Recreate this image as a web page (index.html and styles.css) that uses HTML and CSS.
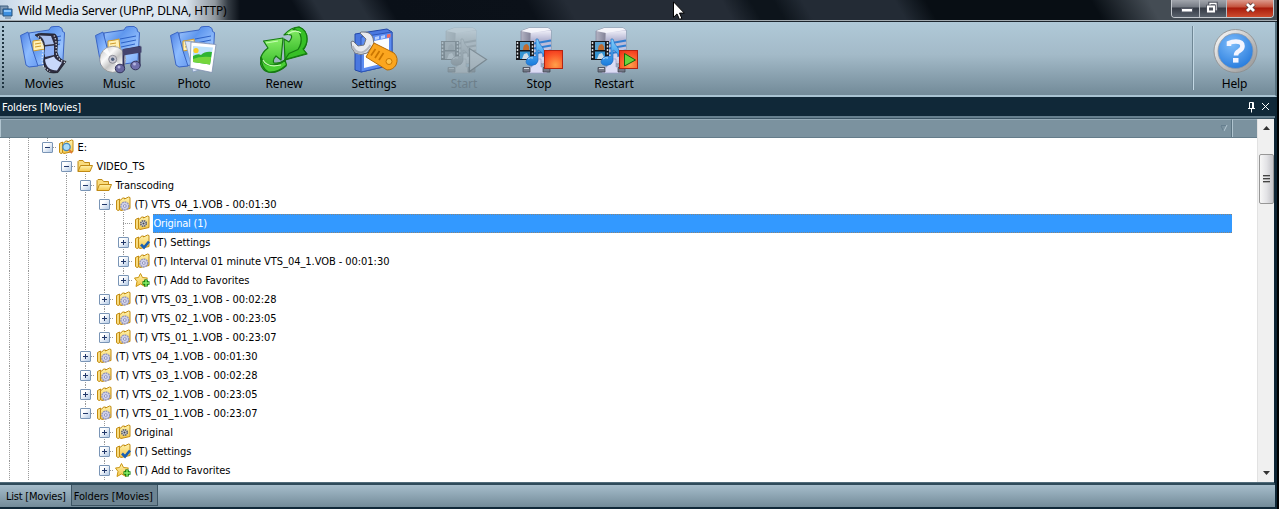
FILE: index.html
```html
<!DOCTYPE html>
<html lang="en">
<head>
  <meta charset="UTF-8" />
  <title>Wild Media Server (UPnP, DLNA, HTTP)</title>
  <link rel="stylesheet" href="styles.css">
</head>
<body>
<svg class="defs" width="0" height="0">
  <defs>
    <linearGradient id="gFolder" x1="0" y1="0" x2="1" y2="1"><stop offset="0" stop-color="#a4caff"/><stop offset=".35" stop-color="#5f97ee"/><stop offset=".7" stop-color="#9ac4ff"/><stop offset="1" stop-color="#74a4f4"/></linearGradient>
    <linearGradient id="gFront" x1="0" y1="0" x2="1" y2="1"><stop offset="0" stop-color="#4d80e2"/><stop offset=".5" stop-color="#8dbcff"/><stop offset="1" stop-color="#6b9df2"/></linearGradient>
    <linearGradient id="gGreen" x1="0" y1="0" x2="0" y2="1"><stop offset="0" stop-color="#8af06a"/><stop offset="1" stop-color="#27b01c"/></linearGradient>
    <linearGradient id="gServer" x1="0" y1="0" x2="1" y2="0"><stop offset="0" stop-color="#b4b4c4"/><stop offset=".3" stop-color="#85859a"/><stop offset=".35" stop-color="#e8e8f4"/><stop offset="1" stop-color="#b9b9d4"/></linearGradient>
    <linearGradient id="gFace" x1="0" y1="0" x2="0" y2="1"><stop offset="0" stop-color="#efeff8"/><stop offset=".3" stop-color="#b4b5d2"/><stop offset="1" stop-color="#dcdcf4"/></linearGradient>
    <linearGradient id="gNote" x1="0" y1="0" x2="0" y2="1"><stop offset="0" stop-color="#7fd0ff"/><stop offset="1" stop-color="#1a7bdc"/></linearGradient>
    <linearGradient id="gGold" x1="0" y1="0" x2="0" y2="1"><stop offset="0" stop-color="#fff3ae"/><stop offset="1" stop-color="#f3c64a"/></linearGradient>
    <radialGradient id="gRed" cx=".6" cy=".8" r=".9"><stop offset="0" stop-color="#ffa04a"/><stop offset=".6" stop-color="#fb5a2a"/><stop offset="1" stop-color="#f0321a"/></radialGradient>
    <radialGradient id="gHelp" cx=".4" cy=".3" r=".8"><stop offset="0" stop-color="#7dbbfa"/><stop offset="1" stop-color="#2076da"/></radialGradient>
    <linearGradient id="gRing" x1="0" y1="0" x2="1" y2="1"><stop offset="0" stop-color="#ffffff"/><stop offset="1" stop-color="#8f8f8f"/></linearGradient>
    <linearGradient id="gDisc" x1="0" y1="0" x2="1" y2="1"><stop offset="0" stop-color="#bdbdbd"/><stop offset=".35" stop-color="#fafafa"/><stop offset=".55" stop-color="#c4c4c4"/><stop offset=".75" stop-color="#f4f4f4"/><stop offset="1" stop-color="#b0b0b0"/></linearGradient>
  </defs>

  <symbol id="folder" viewBox="0 0 48 48">
    <path d="M9 7l20-3 2-3 3-.5h5l3 2 .5 3 2 1-1.500 27-3 3-30 4z" fill="url(#gFolder)" stroke="#3b66c4" stroke-width="1"/>
    <path d="M25 13l16-3M26 17l15-3M26 21l14-3" stroke="#2d62c6" stroke-width="1"/>
    <path d="M13 15l7-1 4-1 1 10-12 2z" fill="#fff0b4" stroke="#cf9a2a" stroke-width="1"/>
    <path d="M15 18l6-1M15 21l6-1" stroke="#cf9a2a" stroke-width="1"/>
    <path d="M0.500 9.500L8 6l5 19 5 15-9 1-3-2z" fill="url(#gFront)" stroke="#3b66c4" stroke-width="1"/>
  </symbol>

  <symbol id="movies" viewBox="0 0 48 48">
    <use href="#folder"/>
    <path d="M15 9q4-2.500 9-1.500l11 .5q3.500 3 2.500 9l-.5 9q2 8 9 9.500l-8 11q-10 2-13-4-3-7 0-15 0-8-3-13z" fill="#2d2d40" stroke="#15151f" stroke-width=".6"/>
    <path d="M19 9.500l12 .5 3 8-9 1q-1-7-6-9.500z" fill="#a9c0ee"/>
    <path d="M25 20.500l9-1v9.500l-9 2z" fill="#8fb2f6"/>
    <path d="M25 33.500l9-3q2 4 8 6l-5 8q-11 0-12-11z" fill="#c8d8fa"/>
    <path d="M18 10.500q5 5 5 14-2 12 1 17l6 4M34 9.500q3 6 2 16 1 8 9 11" fill="none" stroke="#e6eaf4" stroke-width="1.200" stroke-dasharray="1.300 1.700"/>
  </symbol>

  <symbol id="music" viewBox="0 0 48 48">
    <use href="#folder"/>
    <circle cx="17.700" cy="33.300" r="13" fill="url(#gDisc)" stroke="#8a8a8a" stroke-width=".7"/>
    <path d="M17.700 33.300L8 25l4-3zM17.700 33.300L28 41l-4 3z" fill="#fff" opacity=".8"/>
    <circle cx="17.700" cy="33.300" r="4" fill="#c8c8d2" stroke="#8d8d96"/>
    <circle cx="17.700" cy="33.300" r="1.700" fill="#51617e"/>
    <path d="M28.500 42V24l16-3v19" fill="none" stroke="#33335a" stroke-width="2"/>
    <path d="M28 23l18.500-2.500v6l-18.500 3z" fill="#44446e"/>
    <ellipse cx="25" cy="42.500" rx="4.700" ry="4.300" fill="#6868a0" stroke="#33335a"/>
    <ellipse cx="40.500" cy="39.500" rx="4.700" ry="4.300" fill="#7070ac" stroke="#33335a"/>
    <circle cx="24" cy="41" r="1.500" fill="#b4b4de"/>
    <circle cx="39.500" cy="38" r="1.500" fill="#b4b4de"/>
  </symbol>

  <symbol id="photo" viewBox="0 0 48 48">
    <use href="#folder"/>
    <path d="M15 15l20 2 2 24-14 5z" fill="#dbe6f8" stroke="#7b93bc" stroke-width=".7"/>
    <path d="M21 16l25 2.500-4 28L20 42z" fill="#fff" stroke="#7f8fb0" stroke-width=".8"/>
    <path d="M23 20l20 1.500-3 17-17-2.500z" fill="#bfe2fb"/>
    <path d="M23 30q5-3 8-1 4-4 11-3l-2 12.500-17-2.500z" fill="#2fb432"/>
    <path d="M23 33q7-3 18-2l-1 7.500-17-2.500z" fill="#76d63c"/>
    <circle cx="26" cy="24.500" r="2.600" fill="#f9cb25"/>
  </symbol>

  <symbol id="renew" viewBox="0 0 48 48">
    <g stroke="#167b12" stroke-width="1.200" stroke-linejoin="round">
      <path d="M3.500 15l19.500-3-2 22-5-4q-4 4-2 7 5 1 11-3l1 6q-9 8-18 6-7-2-8-11 1-8 8-13z" fill="url(#gGreen)"/>
      <path d="M1 31q3 9 11 8 8 0 13-5l1.500 5q-9 8-18 7-7-3-7.500-15z" fill="#4bcf35"/>
      <path d="M24 9q7-8 15-8 8 3 8 12 0 7-4 11l4 4-22 6-1-21 5 3q4-5 2-7-3-1-7 0z" fill="url(#gGreen)"/>
      <path d="M39 1q8 3 8 12 0 6-4 10l3.500 4.500-21.500 6 4-6 9-4q4-6 3-12-1-8-8-8 3-2.500 6-2.500z" fill="#37c026"/>
    </g>
    <path d="M6 17l12-2M3 34q4 8 18 5M28 8q7-5 13-1" fill="none" stroke="#c7fdb4" stroke-width="1.200"/>
  </symbol>

  <symbol id="settings" viewBox="0 0 48 48">
    <path d="M5 8l32-5 5 3v33l-31 7-6-2z" fill="#4a78e0" stroke="#2348a8"/>
    <path d="M11 11l31-5v33l-31 7z" fill="#5c8cf0" stroke="#2c55b8"/>
    <path d="M14 17l25-5v24l-25 6z" fill="#fbfdff"/>
    <path d="M25 11l4-1v3l-4 1zM31 10l4-1v3l-4 1z" fill="#b8d0ff"/>
    <path d="M37 8.500l3.500-.8v3.500l-3.500.8z" fill="#f36b5c"/>
    <path d="M1 16l2-1 5 5 6-1 2-6-6-6 1-1q10-1 12 6l1 6-7 9q-6 3-12 0-4-4-4-11z" fill="#e8eaee" stroke="#70757e"/>
    <path d="M2.500 20q3 7 9 6.500 5-1 9-7.500" fill="none" stroke="#b4b8c0" stroke-width="2"/>
    <path d="M24 17l20 10q5 5 2 12-3 5-9 5L16 31z" fill="#fba61f" stroke="#b66a05"/>
    <path d="M25.500 23l-4.500 6.500M29.500 25l-4.500 7M33.500 27l-4.500 7" stroke="#c97500" stroke-width="1.700"/>
    <circle cx="39" cy="35.500" r="3" fill="#ffc44b" stroke="#c97500"/>
  </symbol>

  <symbol id="server" viewBox="0 0 48 48">
    <path d="M6 5l8-3h19l3 2v29l-8 5-17-4-5-5z" fill="url(#gServer)" stroke="#777790" stroke-width=".6"/>
    <path d="M6 5l8-3h19l3 2-20 3z" fill="#f4f4fa"/>
    <path d="M16 7l20-2.500v29L16 36z" fill="url(#gFace)"/>
    <path d="M19 17.500l17-3M19 22.500l17-3M19 27.500l17-3" stroke="#2f7ed2" stroke-width="2"/>
    <path d="M17 33h9v8h6v6H12v-6h5z" fill="#dcdcf4" stroke="#9a9cc4" stroke-width=".7"/>
    <path d="M8 41.500h7v4.500H8zM28 41.500h7v4.500h-7z" fill="#747886" stroke="#3b3e47" stroke-width=".7"/>
    <path d="M9 42.500h5M29 42.500h5" stroke="#d4d6dc"/>
    <path d="M1 15h18v19H1z" fill="#17181c"/>
    <path d="M2.500 16v17M17.500 16v17" stroke="#d9dde2" stroke-width="1.500" stroke-dasharray="2 1.500"/>
    <path d="M5 16h10v8H5z" fill="#5b9fcc"/>
    <path d="M5 25.500h10V33H5z" fill="#3494d2"/>
    <path d="M8 24q0-6 4-6 3 2 2 6z" fill="#c26a2c"/>
    <path d="M7 33l2-5 3-1 3 6z" fill="#cfdbe4"/>
    <path d="M21 13h2q1 5 5 9 3 4 0 9 0-5-5-7v11q-1 4-6 4.500-6 0-6-4 1-6 10-5z" fill="url(#gNote)" stroke="#1c67bd" stroke-width=".6"/>
    <path d="M13 33q2-2 5-1" fill="none" stroke="#b7e4ff"/>
  </symbol>
  <symbol id="start" viewBox="0 0 48 48">
    <use href="#server"/>
    <path d="M29.500 22.500l17 11-17 12z" fill="#d8d8d8" stroke="#222" stroke-width="1.200"/>
  </symbol>
  <symbol id="stop" viewBox="0 0 48 48">
    <use href="#server"/>
    <rect x="29.500" y="24.500" width="18" height="18" fill="url(#gRed)" stroke="#b32412"/>
  </symbol>
  <symbol id="restart" viewBox="0 0 48 48">
    <use href="#server"/>
    <rect x="29.500" y="24.500" width="18" height="18" fill="url(#gRed)" stroke="#b32412"/>
    <path d="M34.500 27.500l11 6.500-11 6z" fill="#68d43c" stroke="#17670f"/>
  </symbol>
  <symbol id="help" viewBox="0 0 48 48">
    <circle cx="24.500" cy="25" r="21.500" fill="url(#gRing)" stroke="#8b8b8b" stroke-width=".8"/>
    <circle cx="24.500" cy="25" r="17.500" fill="url(#gHelp)" stroke="#8f9aa8" stroke-width=".8"/>
    <path d="M18 20v-3q3-1.500 7-1.500 6.500 0 6.500 4.500 0 3-3.500 5-3 1.500-3 4.500" fill="none" stroke="#f4f5ff" stroke-width="4.600"/>
    <path d="M22 32h5.500v4.600h-5.500z" fill="#f4f5ff"/>
  </symbol>

  <!-- 16px tree icons -->
  <symbol id="t-open" viewBox="0 0 16 16">
    <path d="M1 13.500V3.500l1-1h4l1.500 2h5v3" fill="#f9dc7e" stroke="#c08a14"/>
    <path d="M1 13.500l2.500-6h12l-2.500 6z" fill="url(#gGold)" stroke="#c08a14"/>
  </symbol>
  <symbol id="t-folder" viewBox="0 0 16 16">
    <path d="M1.500 4.500l3-1.500v11l-1.500.5-1.500-1z" fill="#f8dc80" stroke="#c38c12"/>
    <path d="M4.500 13.500v-9l2-1 1-1.500 2 0 0 1 4-2 1.500.500v11l-9 2z" fill="url(#gGold)" stroke="#c38c12"/>
  </symbol>
  <symbol id="t-drive" viewBox="0 0 16 16">
    <use href="#t-folder"/>
    <circle cx="8.500" cy="8" r="3.700" fill="#a9dcfa" stroke="#4488bc" stroke-width="1.300"/>
    <path d="M11 10.700l3 3.300" stroke="#e07c32" stroke-width="2"/>
  </symbol>
  <symbol id="t-gear" viewBox="0 0 16 16">
    <use href="#t-folder"/>
    <circle cx="9.800" cy="10" r="4" fill="#cfd1ea" stroke="#8f92bc" stroke-width="1.300" stroke-dasharray="1.800 .8"/>
    <circle cx="9.800" cy="10" r="1.400" fill="#eef" stroke="#8083ae" stroke-width=".8"/>
  </symbol>
  <symbol id="t-original" viewBox="0 0 16 16">
    <use href="#t-folder"/>
    <circle cx="9.500" cy="8.500" r="2.800" fill="#c8cad2" stroke="#63656f" stroke-width="1.600" stroke-dasharray="1.500 .7"/>
    <circle cx="9.500" cy="8.500" r="1" fill="#444"/>
  </symbol>
  <symbol id="t-check" viewBox="0 0 16 16">
    <use href="#t-folder"/>
    <path d="M7 10.500l3 3 5-6" fill="none" stroke="#1860b4" stroke-width="2.600"/>
  </symbol>
  <symbol id="t-star" viewBox="0 0 16 16">
    <path d="M6.500 1.500l2 4 5 .5-3.500 3.500 1 5-4.500-2.500L2 14.500 3 9.500.5 6l4-.5z" fill="url(#gGold)" stroke="#cb9613"/>
    <path d="M8.500 11h7M12 7.500v7" stroke="#087a08" stroke-width="3.600"/>
    <path d="M9 11h6M12 8v6" stroke="#8cf06c" stroke-width="1.400"/>
  </symbol>
</svg>

<div class="window">
  <div class="titlebar">
    <svg class="app-icon" width="16" height="16" viewBox="0 0 16 16">
      <path d="M0 2h8v8H0z" fill="#7d98b4" stroke="#3f5f7f"/>
      <path d="M3 5h9v7H3z" fill="#3d8fe0" stroke="#285078"/>
      <path d="M4 6h7v2H4z" fill="#8cc5fa"/>
      <path d="M5 14h6" stroke="#63778c"/>
    </svg>
    <span class="title">Wild Media Server (UPnP, DLNA, HTTP)</span>
    <svg class="cursor" width="12" height="19" viewBox="0 0 12 19">
      <path d="M.5.8v15.500l3.500-3.400 2.500 5.500 2.400-1-2.400-5.300h4.800z" fill="#fff" stroke="#000"/>
    </svg>
    <div class="controls">
      <div class="control"><svg width="27" height="18"><rect x="9.500" y="8.500" width="11" height="3.500" fill="#fff" stroke="#555a66"/></svg></div>
      <div class="control"><svg width="26" height="18"><path d="M10 3.500h6v6h-6z" fill="none" stroke="#4d525d" stroke-width="3.500"/><path d="M10 3.500h6v6h-6z" fill="none" stroke="#fff" stroke-width="1.300"/><path d="M8 6.500h6v5H8z" fill="#555" stroke="#4d525d" stroke-width="3.500"/><path d="M8 6.500h6v5H8z" fill="#4d525d" stroke="#fff" stroke-width="2"/></svg></div>
      <div class="control close"><svg width="46" height="18"><path d="M20 4l7 7M27 4l-7 7" stroke="#593a3a" stroke-width="4.500"/><path d="M20 4l7 7M27 4l-7 7" stroke="#fff" stroke-width="2.800"/></svg></div>
    </div>
  </div>

  <div class="toolbar">
    <div class="grip"></div>
    <div class="tool"><svg><use href="#movies"/></svg><span>Movies</span></div>
    <div class="tool"><svg><use href="#music"/></svg><span>Music</span></div>
    <div class="tool"><svg><use href="#photo"/></svg><span>Photo</span></div>
    <div class="tool gap"><svg><use href="#renew"/></svg><span>Renew</span></div>
    <div class="tool gap"><svg><use href="#settings"/></svg><span>Settings</span></div>
    <div class="tool gap disabled"><svg><use href="#start"/></svg><span>Start</span></div>
    <div class="tool"><svg><use href="#stop"/></svg><span>Stop</span></div>
    <div class="tool"><svg><use href="#restart"/></svg><span>Restart</span></div>
    <div class="separator"></div>
    <div class="tool help"><svg><use href="#help"/></svg><span>Help</span></div>
  </div>

  <div class="caption">
    <span>Folders [Movies]</span>
    <svg width="24" height="12" viewBox="0 0 24 12">
      <path d="M2.500 7V1.500h4V7M5.500 1v6M1 7.500h7M4.500 8v3.500" fill="none" stroke="#fff"/>
      <path d="M15 2l7 7M22 2l-7 7" fill="none" stroke="#fff"/>
    </svg>
  </div>

  <div class="panel">
    <div class="list">
      <div class="header">
        <div class="col main"><svg width="8" height="7"><path d="M1 .5h5.500M1 1l2.500 5" fill="none" stroke="#667f8f"/><path d="M7 0L4 6" stroke="#b4c6d2"/></svg></div>
        <div class="col"></div>
      </div>
      <div class="tree" id="tree"></div>
    </div>
    <div class="scrollbar">
      <svg class="arrow" width="7" height="4"><path d="M0 4l3.500-4L7 4z" fill="#333"/></svg>
      <div class="thumb"><i></i><i></i><i></i></div>
      <svg class="arrow down" width="7" height="4"><path d="M0 0h7L3.500 4z" fill="#333"/></svg>
    </div>
  </div>

  <div class="tabs">
    <div class="tab">List [Movies]</div>
    <div class="tab active">Folders [Movies]</div>
  </div>
</div>

<script>
  // guides: '|' passes through, 'T' branch, 'L' last branch, ' ' nothing
  // the last guide is the node's own branch
  const rows = [
    ['||L', '-', 'drive', 'E:'],
    ['|| T', '-', 'open', 'VIDEO_TS'],
    ['|| |T', '-', 'open', 'Transcoding'],
    ['|| ||T', '-', 'gear', '(T) VTS_04_1.VOB - 00:01:30'],
    ['|| |||T', '', 'original', 'Original (1)', true],
    ['|| |||T', '+', 'check', '(T) Settings'],
    ['|| |||T', '+', 'gear', '(T) Interval 01 minute VTS_04_1.VOB - 00:01:30'],
    ['|| |||L', '+', 'star', '(T) Add to Favorites'],
    ['|| ||T', '+', 'gear', '(T) VTS_03_1.VOB - 00:02:28'],
    ['|| ||T', '+', 'gear', '(T) VTS_02_1.VOB - 00:23:05'],
    ['|| ||L', '+', 'gear', '(T) VTS_01_1.VOB - 00:23:07'],
    ['|| |T', '+', 'gear', '(T) VTS_04_1.VOB - 00:01:30'],
    ['|| |T', '+', 'gear', '(T) VTS_03_1.VOB - 00:02:28'],
    ['|| |T', '+', 'gear', '(T) VTS_02_1.VOB - 00:23:05'],
    ['|| |L', '-', 'gear', '(T) VTS_01_1.VOB - 00:23:07'],
    ['|| | T', '+', 'original', 'Original'],
    ['|| | T', '+', 'check', '(T) Settings'],
    ['|| | T', '+', 'star', '(T) Add to Favorites']
  ];

  const guideClass = { '|': 'pass', 'T': 'branch', 'L': 'branch last', ' ': '' };
  const tree = document.getElementById('tree');

  rows.forEach(([guides, sign, icon, text, selected]) => {
    const row = document.createElement('div');
    row.className = 'row' + (selected ? ' selected' : '');

    [...guides].forEach((g, i) => {
      const cell = document.createElement('div');
      cell.className = 'guide ' + guideClass[g];
      if (i === guides.length - 1 && sign) {
        const box = document.createElement('div');
        box.className = 'expander' + (sign === '+' ? ' plus' : '');
        cell.appendChild(box);
      }
      row.appendChild(cell);
    });

    row.insertAdjacentHTML('beforeend',
      `<div class="icon${sign === '-' ? ' open' : ''}"><svg width="16" height="16"><use href="#t-${icon}"/></svg></div>`);

    const label = document.createElement('div');
    label.className = 'label';
    label.textContent = text;
    row.appendChild(label);
    tree.appendChild(row);
  });
</script>
</body>
</html>
```
FILE: styles.css
```css
* {
  box-sizing: border-box;
}

body {
  margin: 0;
  background: #000;
  color: #000;
  font-family: "DejaVu Sans Condensed", "DejaVu Sans", sans-serif;
  font-size: 11px;
  overflow: hidden;
}

svg {
  display: block;
  flex: none;
}

.defs {
  position: absolute;
}

.window {
  width: 1277px;
  height: 509px;
  display: flex;
  flex-direction: column;
  background: #0e2636;
}

/* title bar */
.titlebar {
  position: relative;
  flex: none;
  height: 22px;
  display: flex;
  align-items: flex-start;
  border-bottom: 1px solid #1b242c;
  box-shadow: inset 0 -1px #a3abb1;
  background:
    linear-gradient(90deg, #c5d6e6 0, #dfe9f2 30px, #dbe6f0 185px, #b4bdc6 200px, #8f969c 215px, rgba(70, 78, 86, .7) 228px, transparent 240px),
    linear-gradient(60deg, transparent 262px, #272f39 282px, #272f39 320px, transparent 345px, #0b1119 465px, #252c36 500px, #252c36 635px, #0d141b 660px, #0d141b 680px, #232b35 705px, #232b35 785px, #080e14 812px, #080e14 955px, #444c54 1005px),
    #0a1018;
}

.app-icon {
  margin: 4px 2px 0 0;
}

.title {
  font-family: "Noto Sans", sans-serif;
  font-size: 12px;
  line-height: 21px;
  letter-spacing: -.2px;
  white-space: nowrap;
}

.cursor {
  position: absolute;
  left: 673px;
  top: 1px;
}

.controls {
  display: flex;
  margin-left: auto;
  margin-right: 3px;
  height: 18px;
  border: 1px solid #c3c8cd;
  border-top: 0;
  border-radius: 0 0 4px 4px;
  overflow: hidden;
}

.control {
  background: linear-gradient(#a2a6ad 0, #747a83 7px, #343a44 8px, #59616c 100%);
  border-right: 1px solid #b6bbc1;
}

.control.close {
  background: linear-gradient(#dc9a8c 0, #c4513c 7px, #a81b0b 8px, #cc4b2d 100%);
  border-right: 0;
}

/* toolbar */
.toolbar {
  flex: none;
  height: 75px;
  display: flex;
  padding: 4px 3px 0 0;
  background: linear-gradient(#b0c9d8, #a3bac8 45%, #728a98);
  border-bottom: 2px solid #a9c3d2;
  border-right: 2px solid #57717f;
}

.grip {
  width: 2px;
  height: 64px;
  margin-left: 2px;
  background: repeating-linear-gradient(#1f3441 0 2px, transparent 2px 4px);
}

.tool {
  width: 75px;
  display: flex;
  flex-direction: column;
  align-items: center;
  font-family: "Noto Sans", sans-serif;
  font-size: 12px;
  line-height: 18px;
  letter-spacing: -.1px;
}

.tool:nth-child(2) {
  margin-left: 2.500px;
}

.tool svg {
  width: 48px;
  height: 48px;
  margin-bottom: 1px;
}

.tool.gap {
  margin-left: 15px;
}

.tool.disabled {
  color: #6d7f8a;
}

.tool.disabled svg {
  filter: grayscale(1) contrast(.7);
  opacity: .35;
}

.separator {
  width: 2px;
  height: 64px;
  margin-left: auto;
  background: linear-gradient(90deg, #6f8795 50%, #c3d8e4 50%);
}

.tool.help {
  margin-left: 3px;
}

/* panel caption */
.caption {
  flex: none;
  height: 21px;
  margin-right: 2px;
  display: flex;
  align-items: center;
  justify-content: space-between;
  padding: 1px 4px 0 2px;
  color: #fff;
  letter-spacing: -.12px;
  background: #102838;
  border-bottom: 2px solid #67808f;
}

/* tree list */
.panel {
  flex: 1;
  min-height: 0;
  display: flex;
  margin-right: 3px;
  border-top: 1px solid #3d5665;
  border-bottom: 1px solid #526c7b;
  background: #fff;
}

.list {
  flex: 1;
  min-width: 0;
}

.header {
  display: flex;
  height: 19px;
  background: #7b929f;
  border-bottom: 1px solid #647c8a;
}

.col {
  width: 25px;
  border-left: 1px solid #b0c4cf;
  border-top: 1px solid #94aab7;
}

.col.main {
  flex: 1;
  padding: 5px 3px;
  display: flex;
  justify-content: flex-end;
  border-right: 1px solid #5b7482;
}

.tree {
  height: 344px;
  overflow: hidden;
}

.row {
  display: flex;
  height: 19px;
  padding-right: 25px;
}

.guide {
  flex: none;
  width: 19px;
  display: flex;
  align-items: center;
  justify-content: center;
  background-repeat: no-repeat;
}

.guide.pass,
.guide.branch {
  background-image: repeating-linear-gradient(#999 0 1px, transparent 1px 2px);
  background-size: 1px 100%;
  background-position: 9px 0;
}

.guide.branch {
  background-image:
    repeating-linear-gradient(#999 0 1px, transparent 1px 2px),
    repeating-linear-gradient(90deg, #999 0 1px, transparent 1px 2px);
  background-size: 1px 100%, 10px 1px;
  background-position: 9px 0, 9px 9px;
}

.guide.last {
  background-size: 1px 10px, 10px 1px;
}

.expander {
  width: 11px;
  height: 11px;
  border: 1px solid #7a95b6;
  border-radius: 1px;
  background:
    linear-gradient(#22386a, #22386a) center / 5px 1px no-repeat,
    linear-gradient(135deg, #fff 30%, #b4cae6);
}

.expander.plus {
  background:
    linear-gradient(#22386a, #22386a) center / 5px 1px no-repeat,
    linear-gradient(#22386a, #22386a) center / 1px 5px no-repeat,
    linear-gradient(135deg, #fff 30%, #b4cae6);
}

.icon {
  flex: none;
  width: 19px;
  padding: 1px 0 0 1px;
}

.icon.open {
  background: repeating-linear-gradient(#999 0 1px, transparent 1px 2px) 9px 17px / 1px 2px no-repeat;
}

.label {
  margin-left: 1px;
  padding-left: .5px;
  line-height: 19px;
  letter-spacing: -.05px;
  white-space: pre;
}

.selected .label {
  flex: 1;
  background: #3399ff;
  color: #fff;
  letter-spacing: -.2px;
  border-top: 1px dotted #8a8478;
  border-bottom: 1px dotted #8a8478;
  line-height: 17px;
}

/* scrollbar */
.scrollbar {
  flex: none;
  width: 17px;
  display: flex;
  flex-direction: column;
  align-items: center;
  background: #f0f0f0;
  border-left: 1px solid #e2e2e2;
}

.arrow {
  margin-top: 7px;
}

.arrow.down {
  margin: auto 0 7px;
}

.thumb {
  width: 15px;
  height: 50px;
  margin-top: 24px;
  padding-top: 20px;
  display: flex;
  flex-direction: column;
  align-items: center;
  gap: 1px;
  border: 1px solid #979797;
  border-radius: 2px;
  background: linear-gradient(90deg, #f7f7f7, #e3e3e6 50%, #c4c4c9);
}

.thumb i {
  width: 7px;
  height: 2px;
  background: linear-gradient(#444 50%, #aaa 50%);
}

/* bottom tabs */
.tabs {
  flex: none;
  height: 26px;
  display: flex;
  margin-right: 2px;
  border-top: 2px solid #2f4b5a;
  border-bottom: 2px solid #102838;
  background: linear-gradient(#a6bdcb, #738b99);
}

.tab {
  padding: 0 5px 0 6px;
  line-height: 23px;
  letter-spacing: -.22px;
}

.tab.active {
  padding: 0 4px 0 2px;
  margin-bottom: 1px;
  line-height: 23px;
  letter-spacing: -.12px;
  background: #6d8492;
  border: 1px solid #3c5463;
  border-top: 0;
}
```
